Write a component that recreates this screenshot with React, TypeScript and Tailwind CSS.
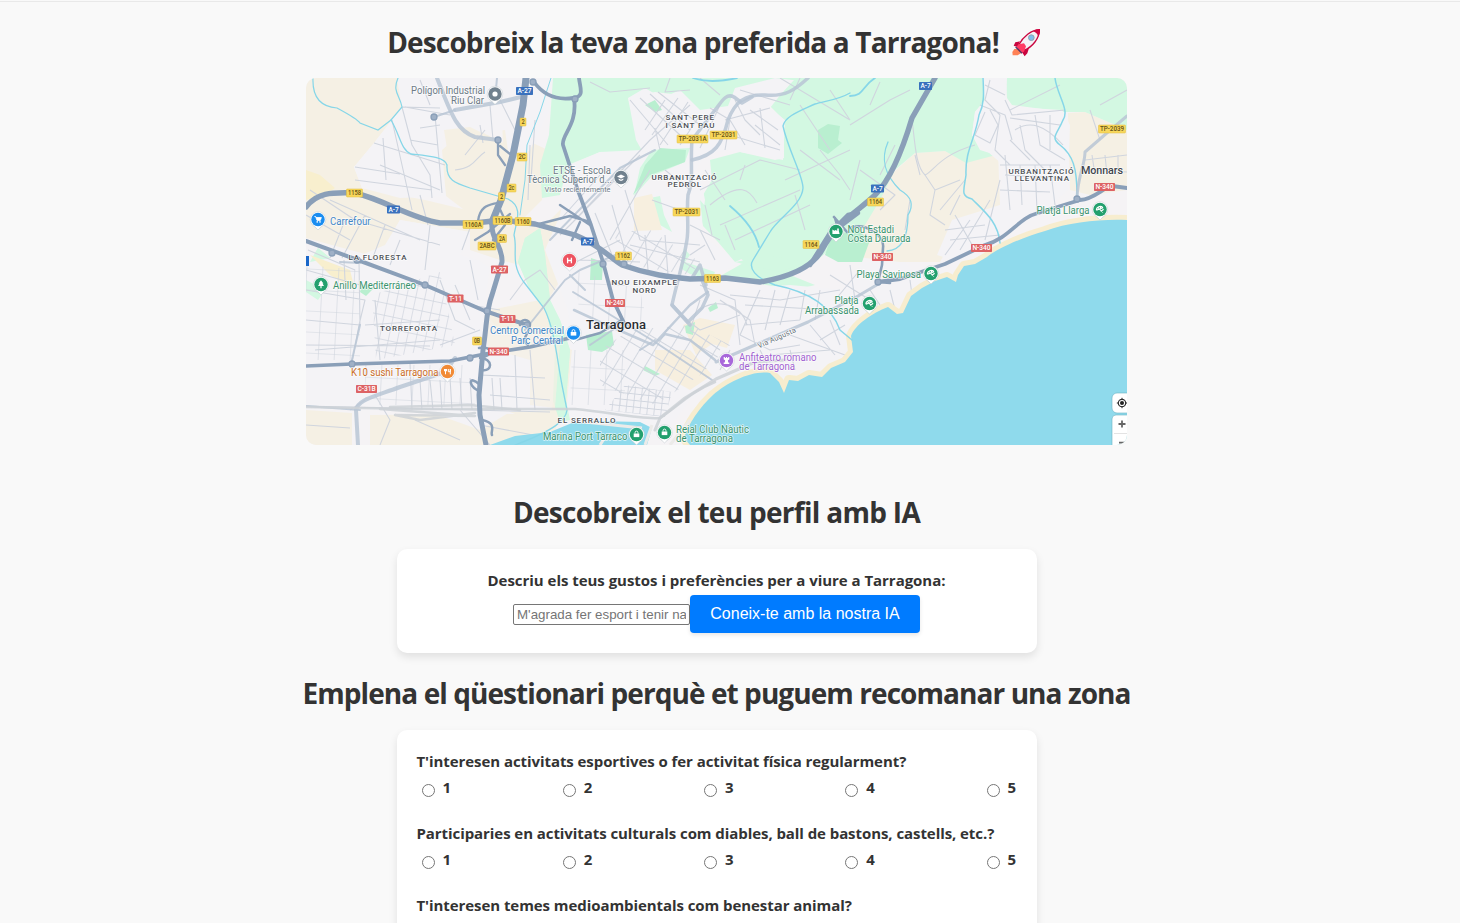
import React from "react";

type Pt = { d: string; w?: number; c?: string };

const MAIN = "#8a9fb8";
const MID = "#b9c5d5";
const MINOR = "#d0d5de";

const urban = [
  "M397 78L460 78L512 78L552 78L550 110L530 150L510 165L505 130L480 133L443 130L441 165L446 196L400 198L362 188L354 167L374 143L402 107Z",
  "M385 245L400 220L470 232L460 255L478 260L490 268L483 312L500 330L560 340L560 345L552 410L510 412L480 430L430 412L306 408L306 255L345 262Z",
  "M570 165L600 152L642 150L650 165L635 200L700 175L705 200L700 235L740 262L700 285L720 290L790 285L845 290L862 262L905 262L925 285L850 340L850 360L780 378L740 372L690 400L660 440L565 425L572 350L568 310L545 250L560 215Z",
  "M628 98L645 88L662 98L680 90L700 110L728 106L735 88L775 78L792 80L770 108L785 120L783 160L730 150L705 155L690 180L650 165L636 140Z",
  "M982 78L1007 78L1006 100L1012 107L1062 110L1070 125L1068 190L1040 215L1000 240L960 262L937 255L952 220L1000 205L1003 165L980 145L972 135L975 112L985 100Z",
];

const beige = [
  "M306 78L397 78L402 107L374 143L354 167L362 188L425 200L530 225L560 235L570 265L545 275L520 265L500 260L470 250L470 232L400 220L380 258L306 238Z",
  "M500 78L515 78L505 130L548 150L542 200L520 222L480 222L446 196L442 150L470 126L503 143Z",
  "M545 225L575 195L590 235L570 265L548 300L520 265Z",
  "M635 200L652 194L662 230L660 232L634 231Z",
  "M850 215L885 180L915 153L945 151L968 162L998 152L1000 205L960 225L940 262L900 262L840 255Z",
  "M1068 113L1085 112L1127 130L1127 190L1090 195L1070 190Z",
  "M306 268L350 290L360 340L340 345L306 325Z M480 312L540 300L562 340L560 410L555 430L510 412L490 390Z",
  "M306 410L352 413L352 445L306 445Z M370 415L520 414L560 420L555 430L500 445L370 445Z",
  "M695 320L732 325L728 350L712 370L680 378L650 375L690 340Z M560 345L572 350L566 420L552 415Z",
];

const green = [
  "M553 78L983 78L985 100L975 112L972 135L980 150L996 155L966 163L945 151L915 153L895 170L880 200L865 225L840 240L812 265L790 275L815 285L795 290L750 282L722 275L745 262L720 242L703 225L700 200L712 180L710 160L740 152L775 160L784 158L784 120L770 106L794 80L775 80L735 90L728 108L700 112L680 95L655 92L628 98L640 140L650 152L600 152L568 165L560 195L542 198L540 165L549 135Z",
  "M1006 78L1127 78L1127 130L1085 112L1065 112L1012 105L1007 98Z",
  "M525 238L540 228L545 255L550 300L560 320L570 350L566 400L570 420L560 422L553 400L555 350L546 310L530 290L518 262Z",
  "M684 248L690 255L685 262L715 272L712 280L690 274L680 268Z M735 262L770 256L805 262L780 272Z",
  "M318 248L330 258L310 262Z M306 280L325 290L318 300L306 292Z",
];

const deepGreen = [
  "M660 148L686 150L685 162L650 175L633 195L645 165Z",
  "M818 130L828 124L840 126L838 140L842 143L828 154L818 148Z",
  "M645 105L655 100L662 110L655 112Z",
  "M586 335L612 331L614 345L602 352L588 350Z",
  "M685 326L695 322L693 335L686 333Z M708 308L716 302L718 308L710 312Z M645 366L660 374L655 376L643 370Z",
  "M830 240L855 228L870 240L862 262L838 262L825 255Z",
  "M591 258L603 262L602 280L590 280Z M362 284L374 288L366 296L360 292Z",
];

const sea =
  "M1127 220C1100 219 1070 222 1045 231C1020 238 995 250 987 257L975 264L964 266L958 275L956 282L947 277L935 281L922 288L911 296L903 313L897 314L888 307C872 313 855 325 851 336L853 352L845 362L831 368L822 377L809 375L798 381L789 380L784 393L779 382L770 373C752 370 728 382 713 395C700 407 688 424 684 438L690 445L1127 445Z";

const water: Pt[] = [
  { d: "M313 78C312 100 324 107 337 108C350 115 358 120 360 123L378 130L391 120L402 107C400 95 392 92 398 78", w: 1.2 },
  { d: "M391 120C400 135 401 150 411 154C430 156 445 157 447 165C446 180 455 183 470 188L508 199C524 207 516 222 514 235C518 250 510 262 523 281L544 308C555 330 557 360 562 385L567 410C566 420 555 430 515 445", w: 1.3 },
  { d: "M551 78L540 112L527 145L525 180L520 215", w: 1 },
  { d: "M850 93C838 100 825 101 815 104C800 111 785 116 783 126C788 150 803 175 803 188C802 205 778 218 770 232L753 260C748 268 755 278 775 285C800 290 830 302 840 330L852 340", w: 1.4 },
  { d: "M730 206C742 216 755 230 759 247", w: 1.8 },
  { d: "M983 78C984 95 984 105 979 115C975 140 965 150 966 175C964 190 960 196 972 199C985 212 998 222 1000 243", w: 1.5 },
  { d: "M1055 78C1057 95 1070 110 1063 120C1057 135 1050 137 1060 145C1073 155 1077 168 1077 195", w: 1.5 },
  { d: "M888 142C880 160 885 175 900 190C912 197 914 205 908 215C908 230 905 250 887 251", w: 1.3 },
  { d: "M850 96C864 96 862 86 875 78M693 78Q710 84 737 78", w: 1.8 },
];

const minor: string[] = [
  "M402 107L440 108M402 107L412 145L430 175L432 198M374 143L445 165M405 107L450 115M435 115L442 193M380 165L440 190M392 120L412 210M383 138L386 180M410 140L438 145M420 128L440 125M355 167L400 174M355 180L432 190M420 80L430 105M450 96L456 100M480 125L483 143M490 105L493 140M500 100L515 130M455 170C475 168 475 158 485 152M465 155L485 130M530 145L528 200M535 120L531 180",
  "M310 190L355 220L440 245M330 200L420 240M345 220L330 258M365 215L342 258M385 225L372 260M400 240L390 265M470 228L462 250M430 225L425 270M420 195L428 225M306 215L350 240M308 250L355 270M306 290L365 300L359 325L352 363M344 260L346 300M359 260L360 325M306 270L360 285M306 320L360 325M315 350L440 340M306 345L430 346M375 300L380 360M365 325L440 320M440 280L455 320L475 330M470 305L500 310M470 260L478 300M455 285L470 320M440 345L480 330",
  "M410 363L412 410M420 380L422 410M430 380L433 410M440 380L442 410M450 378L452 410M460 378L462 410M470 378L472 410M492 378L494 410M500 378L502 410M515 355L517 410M530 350L535 410M306 406L550 412M480 375L545 378M490 395L550 400M375 395L390 420L380 445M306 425L350 428M480 425L560 440M460 410L490 445M415 420L460 440M365 400L350 410M510 300L525 280L540 270L555 290",
  "M560 220L600 175M560 235L640 155M573 222L650 140L690 105M610 240L650 170M570 265L620 240M625 190L640 240M612 205L628 262M595 213L612 255M580 260L640 262M640 240L700 245M645 235L648 270M665 235L668 275M630 245L700 262M700 230L715 260M690 255L705 245M652 200L680 210M665 170L690 190M725 225L735 250M690 225L720 240M705 205L712 235",
  "M630 100L668 145M640 98L680 135M650 94L690 130M658 92L700 125M665 100L645 130M678 98L652 135M688 102L660 145M655 128L660 150M700 115L680 145M710 108L730 120L745 145M725 120L770 108M735 100L745 120L760 135M750 110L778 130M755 125L780 145M730 135L780 150M730 120L725 150M760 108L765 148M720 105L700 148",
  "M670 78L665 92L690 90M700 78L720 95M590 82L610 92L650 88M780 78L850 120M800 78L790 100M740 90L790 105M785 180L850 150M800 150L840 180M700 190L760 160L800 170M710 205C740 180 750 190 757 203M720 225L800 190M735 240L810 205M795 195L805 230M820 150L840 175L850 190M830 90L850 120M800 105L830 150M705 170L725 200M745 165L740 180M850 125L890 100L910 90M860 170L895 195L880 210M850 200L860 160M880 82L870 105",
  "M912 120C915 140 915 165 925 175C935 170 940 155 975 145M925 175L935 190L960 180M935 190L930 215L945 225M960 195L950 215M895 145L880 175M915 155L920 175M965 180L940 210M910 200L905 230M1060 85L1010 110M1127 90L1100 105M1100 140L1090 110",
  "M985 85L1005 95M990 80L985 100L1000 115M980 105L1005 115L1012 140M985 112L975 135L990 143L998 125L990 110M1000 115L995 150L1010 165M1005 100L1012 115L1065 110M1010 118L1060 125M1015 130C1030 120 1045 125 1063 145M1010 140L1030 160M1020 125L1025 150L1045 170M1035 115L1040 145L1065 160M1050 115L1050 150M1000 165L1060 165M1005 175L1060 178M1000 190L1050 192M1005 155L1010 210M1020 165L1022 205M1035 165L1037 210M1050 165L1055 205M985 240L1000 180M960 250L990 200M950 240L1000 235M945 255L970 220M945 230L985 225M955 215L975 250M1085 160L1127 155M1085 170L1127 172M1092 155L1095 175M1105 155L1107 175M1118 155L1118 175",
  "M700 285L735 300L740 345M680 315L700 330L740 315M700 300L690 330L720 350M720 300L750 320L755 345M730 295L780 300L840 290M745 305L830 310M760 290L740 335M775 290L765 330M790 290L780 325M805 290L800 320M820 290L815 320M745 325L800 320M740 335L770 350L800 345M770 355L830 350M790 350L795 370M810 325L835 355M760 350L770 370M830 320L840 345M830 275L870 300M850 265L855 300M860 270L835 300M890 290L895 310M870 290L880 305M910 280L912 295M820 340L845 325M700 310C710 300 740 300 747 325M730 350L720 370M790 335L845 355",
];

const mid: Pt[] = [
  { d: "M437 78C450 110 455 130 475 137L498 140", w: 4 },
  { d: "M455 110L500 102L525 96", w: 4 },
  { d: "M434 117L455 110M495 100L497 78", w: 2 },
  { d: "M808 78C795 90 785 97 765 95C745 94 735 102 728 120C722 145 715 155 692 160", w: 3.5 },
  { d: "M752 97L742 103L734 97C725 92 720 105 715 110L692 140C690 165 694 180 688 195C686 215 690 230 686 245C684 260 675 290 672 305L688 322L702 308L708 295L702 280", w: 3.5 },
  { d: "M550 240L620 168L655 150", w: 2 },
  { d: "M358 445L356 410C358 400 370 398 400 387L445 372L455 358", w: 4 },
  { d: "M306 406L360 410M525 330L565 280L580 270L620 253M340 262L360 263M351 364L360 325M585 290L570 275", w: 2 },
  { d: "M574 310L600 322L653 345L665 334L690 340L715 360M655 343L690 305L708 292", w: 2.5 },
  { d: "M573 292L655 342L712 380M620 325L590 345M655 340L640 350", w: 2 },
  { d: "M716 362L755 345L808 322L858 296L880 283", w: 3 },
  { d: "M692 278L700 265L706 285M672 305L690 325", w: 3.5 },
  { d: "M306 407L420 409L480 409L575 409C610 412 640 420 660 418C680 405 690 392 715 382", w: 2.5, c: "#cdd1d6" },
  { d: "M655 430L660 418L685 398L716 379L755 362L785 360", w: 3, c: "#cdd1d6" },
  { d: "M380 409L475 416L395 415L420 420L475 413M390 407L470 405L520 410", w: 2.5, c: "#cdd1d6" },
  { d: "M1127 116L1108 132L1085 152C1085 165 1078 175 1077 198", w: 3 },
];

const main: Pt[] = [
  { d: "M526 78L523 105L513 155L501 200L492 222", w: 7 },
  { d: "M492 220C490 240 503 245 502 262L492 295C486 310 487 325 483 350L479 395L480 415L486 445", w: 5 },
  { d: "M306 207C317 193 330 192 355 193C385 200 410 218 440 223L475 223L502 220L535 224L575 235C600 245 610 258 622 265C650 275 670 277 690 279L725 278L760 282C790 277 812 268 822 250C838 220 860 210 875 195C892 178 904 145 912 118L935 78", w: 5.4 },
  { d: "M306 241L355 259L425 285L485 311L527 325", w: 4 },
  { d: "M306 366L352 364L450 361L485 354L530 347L570 338", w: 3.6 },
  { d: "M534 82C545 97 560 100 573 98C585 97 580 88 579 78M574 98C578 125 561 135 563 145L577 188L591 225L603 262L613 300L624 323", w: 3.8 },
  { d: "M535 225L570 216L590 222M572 240L580 222M560 205L590 225M575 340L600 333L622 320", w: 2.4 },
  { d: "M498 142L498 155L505 165M500 146L510 154M478 221C480 205 490 205 497 203M475 240L488 232L510 214M498 205L505 220M505 225L493 240", w: 2.3 },
  { d: "M479 348C493 345 493 357 481 357M480 358C493 358 493 372 482 370M479 384C469 375 468 385 477 390M482 420C498 423 490 432 492 435M520 325A5 5 0 1 1 530 325C529 335 520 338 528 345", w: 2.5 },
  { d: "M877 282L900 279L945 264L985 245C1010 238 1018 218 1038 213L1080 200C1095 199 1102 188 1112 186L1127 188", w: 3.8 },
  { d: "M850 228C865 222 885 235 883 248L882 265L878 282L890 283M835 218L840 235M834 217L847 232", w: 2.6 },
  { d: "M810 265L830 233L848 215L858 213L842 225", w: 4.5 },
];

type Tag = { x: number; y: number; t: string; k: "y" | "b" | "r"; w: number };
const tags: Tag[] = [
  { x: 524.5, y: 91, t: "A-27", k: "b", w: 17 },
  { x: 393.5, y: 209.5, t: "A-7", k: "b", w: 13 },
  { x: 587.5, y: 241.5, t: "A-7", k: "b", w: 13 },
  { x: 877.5, y: 188.5, t: "A-7", k: "b", w: 13 },
  { x: 925.5, y: 86, t: "A-7", k: "b", w: 13 },
  { x: 523, y: 122, t: "2", k: "y", w: 6 },
  { x: 522, y: 157, t: "2C", k: "y", w: 10 },
  { x: 511.5, y: 188, t: "2c", k: "y", w: 9 },
  { x: 501.5, y: 196.5, t: "2", k: "y", w: 6 },
  { x: 354.5, y: 193, t: "1158", k: "y", w: 16 },
  { x: 473, y: 224.5, t: "1160A", k: "y", w: 20 },
  { x: 502.5, y: 220.5, t: "1160B", k: "y", w: 19 },
  { x: 523, y: 221.5, t: "1160", k: "y", w: 16 },
  { x: 502, y: 238.5, t: "2A", k: "y", w: 9 },
  { x: 487, y: 246, t: "2ABC", k: "y", w: 18 },
  { x: 692.5, y: 139, t: "TP-2031A", k: "y", w: 31 },
  { x: 723.5, y: 135, t: "TP-2031", k: "y", w: 27 },
  { x: 686.5, y: 212, t: "TP-2031", k: "y", w: 27 },
  { x: 1112, y: 129, t: "TP-2039", k: "y", w: 27 },
  { x: 811, y: 244.5, t: "1164", k: "y", w: 16 },
  { x: 875.5, y: 202, t: "1164", k: "y", w: 16 },
  { x: 623.5, y: 256, t: "1162", k: "y", w: 16 },
  { x: 712.5, y: 278.5, t: "1163", k: "y", w: 16 },
  { x: 477, y: 341, t: "0B", k: "y", w: 9 },
  { x: 499.5, y: 269.5, t: "A-27", k: "r", w: 17 },
  { x: 455.5, y: 298.5, t: "T-11", k: "r", w: 16 },
  { x: 507.5, y: 319, t: "T-11", k: "r", w: 16 },
  { x: 498.5, y: 351.5, t: "N-340", k: "r", w: 21 },
  { x: 366.5, y: 389, t: "C-31B", k: "r", w: 21 },
  { x: 615, y: 303, t: "N-240", k: "r", w: 20 },
  { x: 882.5, y: 257, t: "N-340", k: "r", w: 21 },
  { x: 981.5, y: 248, t: "N-340", k: "r", w: 21 },
  { x: 1104.5, y: 187, t: "N-340", k: "r", w: 21 },
];
const tagFill = { y: "#f7d75c", b: "#3a71bd", r: "#dd6264" };
const tagText = { y: "#665216", b: "#fff", r: "#fff" };

type Label = { x: number; y: number; t: string; w: number; s: number; c: string; b?: number };
const GREY = "#6d7a86";
const GRN = "#39936d";
const DK = "#4b4f55";
const labels: Label[] = [
  { x: 411, y: 93.5, t: "Polígon Industrial", w: 74, s: 10, c: GREY },
  { x: 451, y: 103.5, t: "Riu Clar", w: 33, s: 10, c: GREY },
  { x: 553, y: 174, t: "ETSE - Escola", w: 58, s: 10, c: GREY },
  { x: 527, y: 182.5, t: "Tècnica Superior d...", w: 85, s: 10, c: GREY },
  { x: 544.5, y: 191.5, t: "Visto recientemente", w: 66, s: 7.5, c: GREY },
  { x: 330, y: 225.2, t: "Carrefour", w: 40.5, s: 10, c: "#4285c5" },
  { x: 333, y: 289, t: "Anillo Mediterráneo", w: 83, s: 10, c: GRN },
  { x: 351, y: 376, t: "K10 sushi Tarragona", w: 87.5, s: 10, c: "#ca6c26" },
  { x: 490, y: 334, t: "Centro Comercial", w: 74, s: 10, c: "#4285c5" },
  { x: 511, y: 343.5, t: "Parc Central", w: 52, s: 10, c: "#4285c5" },
  { x: 847.5, y: 232.5, t: "Nou Estadi", w: 46.5, s: 10, c: GRN },
  { x: 847.5, y: 241.5, t: "Costa Daurada", w: 63, s: 10, c: GRN },
  { x: 856.5, y: 278, t: "Playa Savinosa", w: 64.5, s: 10, c: GRN },
  { x: 834.5, y: 304, t: "Platja", w: 24, s: 10, c: GRN },
  { x: 805, y: 314, t: "Arrabassada", w: 54, s: 10, c: GRN },
  { x: 1036.5, y: 213.5, t: "Platja Llarga", w: 53, s: 10, c: GRN },
  { x: 739, y: 361, t: "Anfiteatro romano", w: 77.5, s: 10, c: "#a162d1" },
  { x: 739, y: 369.5, t: "de Tarragona", w: 56, s: 10, c: "#a162d1" },
  { x: 676, y: 433, t: "Reial Club Nàutic", w: 73, s: 10, c: GRN },
  { x: 676, y: 441.5, t: "de Tarragona", w: 57, s: 10, c: GRN },
  { x: 543, y: 440, t: "Marina Port Tarraco", w: 84.5, s: 10, c: GRN },
  { x: 665.5, y: 120, t: "SANT PERE", w: 48.5, s: 8, c: DK, b: 500 },
  { x: 665.5, y: 128, t: "I SANT PAU", w: 49, s: 8, c: DK, b: 500 },
  { x: 651.5, y: 179.5, t: "URBANITZACIÓ", w: 65, s: 8, c: DK, b: 500 },
  { x: 667.5, y: 187, t: "PEDROL", w: 33.5, s: 8, c: DK, b: 500 },
  { x: 1008.5, y: 173.5, t: "URBANITZACIÓ", w: 65, s: 8, c: DK, b: 500 },
  { x: 1014.5, y: 181, t: "LLEVANTINA", w: 54.5, s: 8, c: DK, b: 500 },
  { x: 348.5, y: 259.5, t: "LA FLORESTA", w: 58, s: 8, c: DK, b: 500 },
  { x: 380, y: 331, t: "TORREFORTA", w: 57, s: 8, c: DK, b: 500 },
  { x: 611.5, y: 284.5, t: "NOU EIXAMPLE", w: 65.5, s: 8, c: DK, b: 500 },
  { x: 632.5, y: 292.5, t: "NORD", w: 23.5, s: 8, c: DK, b: 500 },
  { x: 557.5, y: 423, t: "EL SERRALLO", w: 58, s: 8, c: DK, b: 500 },
  { x: 1081, y: 174, t: "Monnars", w: 42, s: 10.8, c: "#3f444b", b: 500 },
  { x: 586, y: 329, t: "Tarragona", w: 60, s: 13, c: "#2b2d31", b: 500 },
];

const glyphs: Record<string, React.ReactNode> = {
  dot: <circle r="2.6" fill="#fff" />,
  cap: <path d="M-4-1L0-3L4-1L0 1ZM-2.3 1L0 2.3L2.3 1V2.5L0 3.4L-2.3 2.5Z" fill="#fff" />,
  cart: (
    <g>
      <path d="M-3.6-3H-2.4L-1 .9H2.3L3.4-2H-2" fill="#fff" stroke="#fff" strokeWidth=".8" />
      <circle cx="-.8" cy="2.4" r=".8" fill="#fff" />
      <circle cx="2" cy="2.4" r=".8" fill="#fff" />
    </g>
  ),
  tree: <path d="M0-4.2L2.4-1H1.5L3 1.6H.6V3.8H-.6V1.6H-3L-1.5-1H-2.4Z" fill="#fff" />,
  h: <path d="M-1.9-2.8V2.8M1.9-2.8V2.8M-1.9 0H1.9" stroke="#fff" strokeWidth="1.3" fill="none" />,
  bag: (
    <g>
      <rect x="-2.8" y="-1" width="5.6" height="3.6" fill="#fff" />
      <path d="M-1.4-1V-2A1.4 1.4 0 0 1 1.4-2V-1" stroke="#fff" strokeWidth=".9" fill="none" />
    </g>
  ),
  fork: <path d="M-3-2.5V-.5H-1V-2.5M-2-2.5V2.8M.8-2.5V.2H2.8V-2.5V2.8" stroke="#fff" strokeWidth="1" fill="none" />,
  beach: (
    <g fill="none" stroke="#fff" strokeWidth="1.1">
      <path d="M-3.6 .8C-3.8-3 .6-4.2 3-1.8M-3.6 .8L3-1.8M-2-1.8L-.4-.4M.2-3.2L.8-1M-.6-.4L3 2.8M.8 2L3.6-.2" />
    </g>
  ),
  stadium: <path d="M-3.6-2L-1.6-.8L-.2-1.6L1.2-.6V-3H2.8V-.7L3.6 2.5H-3.6Z" fill="#fff" />,
  rook: <path d="M-2.8-3.4H-1.6V-2.4H-.6V-3.4H.6V-2.4H1.6V-3.4H2.8V-1L1.4-.2L1.7 2H2.8V3.4H-2.8V2H-1.7L-1.4-.2L-2.8-1Z" fill="#fff" />,
};
type Pin = { x: number; y: number; c: string; g: string };
const pins: Pin[] = [
  { x: 495, y: 94, c: "#71818e", g: "dot" },
  { x: 621, y: 177.5, c: "#71818e", g: "cap" },
  { x: 318, y: 219.5, c: "#1a8df0", g: "cart" },
  { x: 321, y: 284.5, c: "#23a06e", g: "tree" },
  { x: 569.5, y: 260.5, c: "#ed5360", g: "h" },
  { x: 573.5, y: 333, c: "#1a8df0", g: "bag" },
  { x: 447.5, y: 371.5, c: "#f18a35", g: "fork" },
  { x: 836, y: 231.5, c: "#23a06e", g: "stadium" },
  { x: 931, y: 273.5, c: "#23a06e", g: "beach" },
  { x: 869.5, y: 303.5, c: "#23a06e", g: "beach" },
  { x: 1100, y: 209.5, c: "#23a06e", g: "beach" },
  { x: 726.5, y: 360.5, c: "#a868da", g: "rook" },
  { x: 664.5, y: 432.5, c: "#23a06e", g: "bag" },
  { x: 636.5, y: 434.5, c: "#23a06e", g: "bag" },
];

const nodes: number[][] = [
  [498, 140], [434, 117], [352, 364], [425, 285], [487, 311], [470, 358], [533, 82], [575, 99], [332, 253], [357, 260],
  [603, 264], [624, 264], [878, 282], [1077, 199], [500, 220], [527, 325],
];

function TarragonaMap() {
  return (
    <svg viewBox="306 78 821 367" className="block h-[367px] w-[821px] rounded-[10px]" role="img">
      <defs>
        <pattern id="gridA" width="9" height="12" patternUnits="userSpaceOnUse" patternTransform="rotate(12)">
          <path d="M0 0H9M0 0V12" stroke={MINOR} strokeWidth="1.4" />
        </pattern>
        <pattern id="gridB" width="13" height="16" patternUnits="userSpaceOnUse" patternTransform="rotate(31)">
          <path d="M0 0H13M0 0V16" stroke={MINOR} strokeWidth="1.8" />
        </pattern>
        <pattern id="gridC" width="7" height="6.5" patternUnits="userSpaceOnUse" patternTransform="rotate(6)">
          <path d="M0 0H7M0 0V6.5" stroke={MINOR} strokeWidth="1.7" />
        </pattern>
        <pattern id="gridD" width="16" height="21" patternUnits="userSpaceOnUse" patternTransform="rotate(3)">
          <path d="M0 0H16M0 0V21" stroke={MINOR} strokeWidth="1.2" />
        </pattern>
      </defs>
      <rect x="306" y="78" width="821" height="367" fill="#f5f3f5" />
      {beige.map((d, i) => <path key={i} d={d} fill="#f5f0e4" />)}
      {green.map((d, i) => <path key={i} d={d} fill="#d3f8e2" />)}
      {urban.map((d, i) => <path key={i} d={d} fill="#f4f3f6" />)}
      <path d={green[2]} fill="#d3f8e2" />
      <path d={green[3]} fill="#d3f8e2" />
      <path d={green[4]} fill="#d3f8e2" />
      <path d="M700 200L712 214L722 232L740 240L748 256L735 262L718 242L703 226ZM640 200L660 196L664 215L672 232L655 222ZM640 168L652 150L690 148L685 162L652 176L634 196Z" fill="#d3f8e2" />
      <path d="M306 170L320 175L335 188L325 195L306 200ZM310 255L350 270L355 290L330 275Z" fill="#f8efce" />
      <path d="M444 130L470 127L503 143L505 160L480 185L452 180Z" fill="#f5f0e4" />
      <path d="M683 325L700 318L735 325L727 348L712 344L696 355ZM655 350L690 350L712 375L690 390L655 370ZM634 198L652 194L662 230L634 231Z" fill="#f7efdf" />
      <path d="M484 315L515 330L560 345L555 408L530 405L530 360L488 348Z" fill="#f5f0e4" opacity=".7" />
      {deepGreen.map((d, i) => <path key={i} d={d} fill="#b9efd0" />)}

      <path d="M372 295L440 272L455 345L376 360Z" fill="url(#gridA)" />
      <path d="M630 330L690 325L730 345L700 375L655 405L600 385L600 350Z" fill="url(#gridB)" />
      <path d="M625 385L672 392L665 417L605 410Z" fill="url(#gridC)" />
      <path d="M306 265L360 270L360 360L306 360ZM572 350L625 350L625 405L570 405ZM365 365L475 365L475 405L365 405ZM575 270L640 290L650 335L580 320Z" fill="url(#gridD)" />
      <path d="M612 232L650 230L700 262L690 275L630 265Z" fill="url(#gridB)" />
      {minor.map((d, i) => <path key={i} d={d} fill="none" stroke={MINOR} strokeWidth="1.1" strokeLinejoin="round" />)}

      <path d={sea} fill="#8fdaec" stroke="#f7edcf" strokeWidth="10" strokeLinejoin="round" paintOrder="stroke" />
      <path d="M490 445L515 436L550 432L572 423L596 421L640 422L652 428L647 445Z" fill="#8fdaec" />
      <path d="M575 421L642 428M600 445L606 436M652 425L645 445M670 445L690 420" stroke="#ecebe9" strokeWidth="3" fill="none" />

      <g fill="none" stroke="#86d6e8" strokeLinecap="round">
        {water.map((p, i) => <path key={i} d={p.d} strokeWidth={p.w} />)}
      </g>
      <g fill="none" strokeLinejoin="round" strokeLinecap="round">
        {mid.map((p, i) => <path key={i} d={p.d} stroke={p.c ?? MID} strokeWidth={p.w} opacity=".85" />)}
        {main.map((p, i) => <path key={i} d={p.d} stroke={MAIN} strokeWidth={p.w} />)}
      </g>
      {nodes.map(([x, y], i) => <circle key={i} cx={x} cy={y} r="3" fill="#9fb0c6" stroke={MAIN} strokeWidth="1.3" />)}

      {tags.map((g, i) => (
        <g key={i}>
          <rect x={g.x - g.w / 2} y={g.y - 4} width={g.w} height="8" rx=".8" fill={tagFill[g.k]} stroke={g.k === "y" ? "#e2bc3c" : "none"} strokeWidth=".5" />
          <text x={g.x - g.w / 2 + 1.4} y={g.y + 2.4} fontSize="6.6" fontWeight="500" textLength={g.w - 2.8} lengthAdjust="spacingAndGlyphs" fill={tagText[g.k]}>{g.t}</text>
        </g>
      ))}
      {pins.map((p, i) => (
        <g key={i} transform={`translate(${p.x} ${p.y})`}>
          <path d="M-5.8 5L0 10.4L5.8 5Z" fill="#fff" stroke="#b9c3c8" strokeWidth=".5" />
          <circle r="7.8" fill="#fff" stroke="#b9c3c8" strokeWidth=".4" />
          <path d="M-5 5L0 9.6L5 5Z" fill="#fff" />
          <circle r="6.7" fill={p.c} />
          {glyphs[p.g]}
        </g>
      ))}
      {labels.map((l, i) => (
        <text key={i} x={l.x} y={l.y} fontSize={l.s} fontWeight={l.b ?? 400} textLength={l.w} lengthAdjust={l.b ? "spacing" : "spacingAndGlyphs"} fill={l.c} stroke="#fff" strokeOpacity=".75" strokeWidth="1.5" paintOrder="stroke" strokeLinejoin="round">{l.t}</text>
      ))}
      <text transform="translate(759 348.5) rotate(-24)" fontSize="7.5" textLength="41" fill="#66707a" stroke="#fff" strokeWidth="1.2" paintOrder="stroke">Via Augusta</text>

      <rect x="306" y="256" width="3" height="10" fill="#1967c9" />
      <g>
        <rect x="1112" y="393" width="24" height="20" rx="5" fill="#fff" stroke="#6cb3c5" strokeWidth=".6" />
        <rect x="1112" y="415" width="24" height="42" rx="4" fill="#fff" stroke="#6cb3c5" strokeWidth=".6" />
        <circle cx="1122" cy="403" r="3.7" fill="none" stroke="#333" strokeWidth="1.2" />
        <circle cx="1122" cy="403" r="2" fill="#222" />
        <path d="M1122 397.8V400M1122 406V408.2M1116.8 403H1119M1125 403H1127" stroke="#333" />
        <path d="M1118.5 424H1125.5M1122 420.5V427.5M1119 442.7H1125" stroke="#666" strokeWidth="1.8" />
        <path d="M1114 433.5H1127" stroke="#e3e3e3" />
      </g>
    </svg>
  );
}

function Rocket() {
  return (
    <svg viewBox="0 0 90 90" className="h-[30px] w-[30px]">
      <path d="M7 66L1 75L2 85L17 85L29 77L20 66Z" fill="#ff8257" />
      <path d="M24 43L10 46L5 56L16 60Z M52 60L46 79L38 88L29 74Z" fill="#c9063f" />
      <path d="M82 8C60 8 34 28 20 54L36 70C62 60 82 34 82 8Z" fill="#f5f2f6" stroke="#c9063f" strokeWidth="4" />
      <path d="M62 13Q72 6 84 7Q86 18 79 29Q76 17 62 13Z" fill="#d30845" />
      <path d="M13 60L20 52L36 49L42 58L36 74L28 78Z" fill="#ff3b63" />
      <path d="M11 60L30 79" stroke="#533568" strokeWidth="4" />
      <circle cx="58" cy="32" r="8.5" fill="#7fc0ee" stroke="#93a3ae" strokeWidth="3" />
    </svg>
  );
}

const questions = [
  { text: "T'interesen activitats esportives o fer activitat física regularment?", scale: [1, 2, 3, 4, 5] },
  { text: "Participaries en activitats culturals com diables, ball de bastons, castells, etc.?", scale: [1, 2, 3, 4, 5] },
  { text: "T'interesen temes medioambientals com benestar animal?", scale: [] },
];

function Question({ text, name, scale }: { text: string; name: string; scale: number[] }) {
  return (
    <fieldset className="h-[72px]">
      <legend className="h-6 text-[15px] leading-[22px] font-bold tracking-[-0.07px] whitespace-nowrap">{text}</legend>
      <div className="flex justify-between pl-[5px]">
        {scale.map((n) => (
          <label key={n} className="flex h-7 gap-2 text-[15px] leading-6 font-bold">
            <input type="radio" name={name} value={n} className="mt-[10px] h-[13px] w-[13px]" />
            <span className="mt-px w-[9px]">{n}</span>
          </label>
        ))}
      </div>
    </fieldset>
  );
}

export default function App() {
  return (
    <div className="h-[923px] overflow-hidden bg-[#f9f9f9] font-['Open_Sans','Noto_Sans',sans-serif] text-[#333]">
      <div className="h-[2px] border-b border-[#e9e9e9]" />
      <main className="flex w-[1433px] flex-col items-center">
        <h1 className="mr-1 flex h-[76px] items-center gap-[13px] pt-1 text-[28px] font-bold whitespace-nowrap">
          <span className="tracking-[-0.85px]">Descobreix la teva zona preferida a Tarragona!</span>
          <Rocket />
        </h1>
        <div className="font-[Roboto,sans-serif]">
          <TarragonaMap />
        </div>
        <h2 className="mt-[39px] flex h-[65px] items-center pb-[9px] text-[28px] leading-[38px] font-bold tracking-[-0.7px] whitespace-nowrap">
          Descobreix el teu perfil amb IA
        </h2>
        <section className="flex h-[104px] w-[640px] flex-col items-center rounded-[10px] bg-white pt-5 shadow-[0_4px_8px_rgba(0,0,0,0.1)]">
          <label className="h-[26px] text-[15px] leading-[22px] font-bold tracking-[-0.03px] whitespace-nowrap">
            Descriu els teus gustos i preferències per a viure a Tarragona:
          </label>
          <div className="flex items-center font-['Liberation_Sans',Arial,sans-serif]">
            <input
              className="mt-px h-[21px] w-[177px] rounded-[2px] border border-[#767676] bg-white px-[3px] text-[13.333px] placeholder:text-[#757575]"
              placeholder="M'agrada fer esport i tenir natura a prop"
            />
            <button className="h-[38px] w-[230px] rounded bg-[#007bff] text-base text-white shadow-[0_2px_4px_rgba(0,0,0,0.1)]">
              Coneix-te amb la nostra IA
            </button>
          </div>
        </section>
        <h2 className="flex h-[77px] items-center pt-[2px] text-[28px] font-bold tracking-[-0.93px] whitespace-nowrap">
          Emplena el qüestionari perquè et puguem recomanar una zona
        </h2>
        <form className="h-[300px] w-[640px] rounded-[10px] bg-white px-5 pt-5 shadow-[0_4px_8px_rgba(0,0,0,0.1)]">
          {questions.map((q, i) => (
            <Question key={q.text} text={q.text} name={`q${i}`} scale={q.scale} />
          ))}
        </form>
      </main>
    </div>
  );
}
